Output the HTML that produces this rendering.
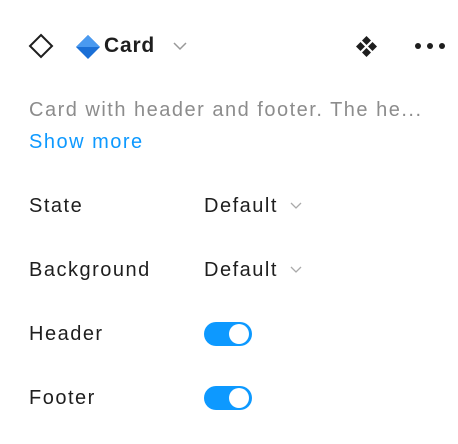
<!DOCTYPE html>
<html><head><style>
body{margin:0;width:458px;height:444px;background:#fff;font-family:"Liberation Sans",sans-serif;position:relative;overflow:hidden;color:#1e1e1e}
.a{position:absolute;white-space:nowrap;letter-spacing:1.5px}
.lbl{font-size:20px;left:29px}
.val{font-size:20px;left:204px}
.tog{position:absolute;left:204px;width:48px;height:24px;border-radius:12px;background:#0d99ff}
.tog::after{content:"";position:absolute;right:3px;top:2px;width:20px;height:20px;border-radius:50%;background:#fff}
</style></head><body>
<svg class="a" style="left:28px;top:33px" width="26" height="26"><path d="M13 2 L24 13 L13 24 L2 13 Z" fill="none" stroke="#1e1e1e" stroke-width="2"/></svg>
<svg class="a" style="left:75px;top:34px" width="26" height="26"><path d="M13 1 L25 13 L13 25 L1 13 Z" fill="#1a6fd6"/><path d="M13 1 L25 13 L1 13 Z" fill="#4a9af0"/></svg>
<div class="a" style="left:104px;top:34px;font-size:21px;font-weight:bold;letter-spacing:0.8px">Card</div>
<svg class="a" style="left:172px;top:41px" width="16" height="10"><path d="M2 2 L8 8 L14 2" fill="none" stroke="#999" stroke-width="1.5"/></svg>
<svg class="a" style="left:354px;top:34px" width="25" height="25"><g fill="#1e1e1e"><path d="M12.5 2 L17 6.5 L12.5 11 L8 6.5Z"/><path d="M12.5 14 L17 18.5 L12.5 23 L8 18.5Z"/><path d="M6.5 8 L11 12.5 L6.5 17 L2 12.5Z"/><path d="M18.5 8 L23 12.5 L18.5 17 L14 12.5Z"/></g></svg>
<svg class="a" style="left:412px;top:40px" width="36" height="12"><g fill="#1e1e1e"><circle cx="6" cy="6" r="3"/><circle cx="18" cy="6" r="3"/><circle cx="30" cy="6" r="3"/></g></svg>
<div class="a" style="left:29px;top:99px;font-size:20px;color:#8c8c8c">Card with header and footer. The he...</div>
<div class="a" style="left:29px;top:131px;font-size:20px;color:#0d99ff">Show more</div>
<div class="a lbl" style="top:195px">State</div>
<div class="a val" style="top:195px">Default</div>
<svg class="a" style="left:289px;top:201px" width="14" height="9"><path d="M2 2 L7 7 L12 2" fill="none" stroke="#aaa" stroke-width="1.3"/></svg>
<div class="a lbl" style="top:259px">Background</div>
<div class="a val" style="top:259px">Default</div>
<svg class="a" style="left:289px;top:265px" width="14" height="9"><path d="M2 2 L7 7 L12 2" fill="none" stroke="#aaa" stroke-width="1.3"/></svg>
<div class="a lbl" style="top:323px">Header</div>
<div class="tog" style="top:322px"></div>
<div class="a lbl" style="top:387px">Footer</div>
<div class="tog" style="top:386px"></div>
</body></html>
